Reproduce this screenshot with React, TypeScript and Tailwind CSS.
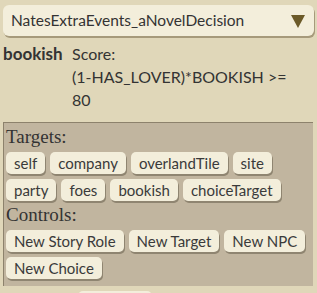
import React from "react";

const Btn = ({ children }: { children: React.ReactNode }) => (
  <div className="h-[22px] px-[8px] flex items-center rounded-[5px] bg-[#f3eedb] text-[#3a3a3a] text-[15px] leading-none shadow-[1px_2px_0_#8f8571]">
    {children}
  </div>
);

export default function App() {
  const sans = { fontFamily: "Lato, 'Open Sans', sans-serif" };
  const serif = { fontFamily: "'Liberation Serif', serif" };
  return (
    <div className="w-[317px] h-[293px] bg-[#e0d7b9] overflow-hidden" style={sans}>
      <div className="pt-[5px] px-[3px]">
        <div className="h-[31px] flex items-center justify-between rounded-[6px] bg-[#f3eedb] shadow-[1px_2px_0_#a69a7b] pl-[8px] pr-[9px]">
          <span className="text-[15.5px] text-[#333]">NatesExtraEvents_aNovelDecision</span>
          <svg width="14" height="14" viewBox="0 0 14 14">
            <polygon points="0,1 14,1 7,14" fill="#6b5a28" />
          </svg>
        </div>
      </div>
      <div className="flex pl-[3px] pt-[6px] text-[#333]">
        <div className="font-bold text-[17px] leading-[23px] w-[69px]">bookish</div>
        <div className="text-[16px] leading-[23px] w-[236px]">
          Score:
          <br />
          (1-HAS_LOVER)*BOOKISH &gt;=
          <br />
          80
        </div>
      </div>
      <div className="ml-[3px] mr-[4px] mt-[11px] h-[164px] bg-[#c1b59f] border-l border-t border-[#8d826c] pl-[2px]">
        <div className="text-[19px] leading-[22px] pt-[3px] text-[#333]" style={serif}>
          Targets:
        </div>
        <div className="flex flex-wrap gap-x-[5px] gap-y-[5px] mt-[4px]">
          {["self", "company", "overlandTile", "site", "party", "foes", "bookish", "choiceTarget"].map((t) => (
            <Btn key={t}>{t}</Btn>
          ))}
        </div>
        <div className="text-[19px] leading-[22px] mt-[3px] text-[#333]" style={serif}>
          Controls:
        </div>
        <div className="flex flex-wrap gap-x-[5px] gap-y-[5px] mt-[4px]">
          {["New Story Role", "New Target", "New NPC", "New Choice"].map((t) => (
            <Btn key={t}>{t}</Btn>
          ))}
        </div>
      </div>
      <div className="ml-[78px] mt-[5px] w-[74px] h-[10px] rounded-t-[5px] bg-[#f3eedb]" />
    </div>
  );
}
